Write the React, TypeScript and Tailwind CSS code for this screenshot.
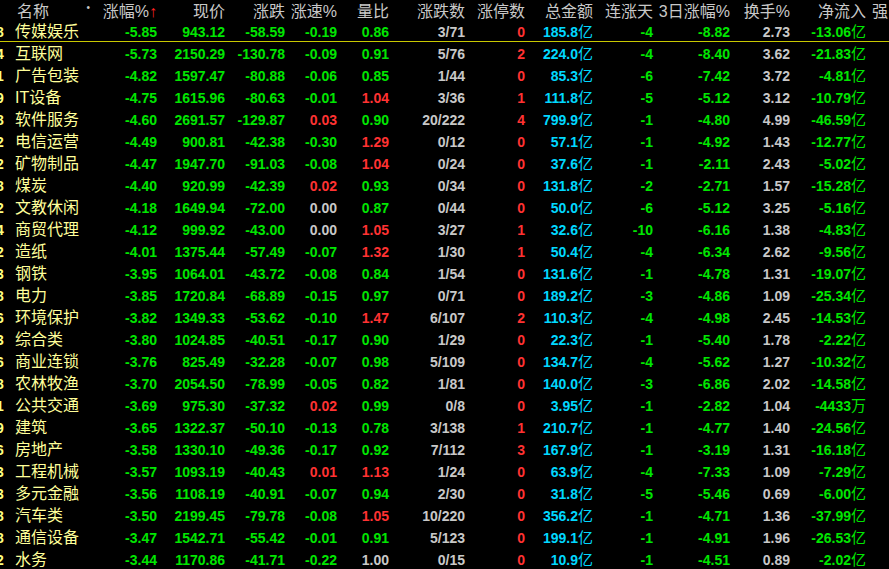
const rows: string[][] = [
  ['8', '传媒娱乐', '-5.85', '943.12', '-58.59', '-0.19', '0.86', '3/71', '0', '185.8', '-4', '-8.82', '2.73', '-13.06亿'],
  ['4', '互联网', '-5.73', '2150.29', '-130.78', '-0.09', '0.91', '5/76', '2', '224.0', '-4', '-8.40', '3.62', '-21.83亿'],
  ['1', '广告包装', '-4.82', '1597.47', '-80.88', '-0.06', '0.85', '1/44', '0', '85.3', '-6', '-7.42', '3.72', '-4.81亿'],
  ['9', 'IT设备', '-4.75', '1615.96', '-80.63', '-0.01', '1.04', '3/36', '1', '111.8', '-5', '-5.12', '3.12', '-10.79亿'],
  ['8', '软件服务', '-4.60', '2691.57', '-129.87', '0.03', '0.90', '20/222', '4', '799.9', '-1', '-4.80', '4.99', '-46.59亿'],
  ['2', '电信运营', '-4.49', '900.81', '-42.38', '-0.30', '1.29', '0/12', '0', '57.1', '-1', '-4.92', '1.43', '-12.77亿'],
  ['2', '矿物制品', '-4.47', '1947.70', '-91.03', '-0.08', '1.04', '0/24', '0', '37.6', '-1', '-2.11', '2.43', '-5.02亿'],
  ['8', '煤炭', '-4.40', '920.99', '-42.39', '0.02', '0.93', '0/34', '0', '131.8', '-2', '-2.71', '1.57', '-15.28亿'],
  ['2', '文教休闲', '-4.18', '1649.94', '-72.00', '0.00', '0.87', '0/44', '0', '50.0', '-6', '-5.12', '3.25', '-5.16亿'],
  ['4', '商贸代理', '-4.12', '999.92', '-43.00', '0.00', '1.05', '3/27', '1', '32.6', '-10', '-6.16', '1.38', '-4.83亿'],
  ['2', '造纸', '-4.01', '1375.44', '-57.49', '-0.07', '1.32', '1/30', '1', '50.4', '-4', '-6.34', '2.62', '-9.56亿'],
  ['3', '钢铁', '-3.95', '1064.01', '-43.72', '-0.08', '0.84', '1/54', '0', '131.6', '-1', '-4.78', '1.31', '-19.07亿'],
  ['8', '电力', '-3.85', '1720.84', '-68.89', '-0.15', '0.97', '0/71', '0', '189.2', '-3', '-4.86', '1.09', '-25.34亿'],
  ['6', '环境保护', '-3.82', '1349.33', '-53.62', '-0.10', '1.47', '6/107', '2', '110.3', '-4', '-4.98', '2.45', '-14.53亿'],
  ['3', '综合类', '-3.80', '1024.85', '-40.51', '-0.17', '0.90', '1/29', '0', '22.3', '-1', '-5.40', '1.78', '-2.22亿'],
  ['6', '商业连锁', '-3.76', '825.49', '-32.28', '-0.07', '0.98', '5/109', '0', '134.7', '-4', '-5.62', '1.27', '-10.32亿'],
  ['8', '农林牧渔', '-3.70', '2054.50', '-78.99', '-0.05', '0.82', '1/81', '0', '140.0', '-3', '-6.86', '2.02', '-14.58亿'],
  ['1', '公共交通', '-3.69', '975.30', '-37.32', '0.02', '0.99', '0/8', '0', '3.95', '-1', '-2.82', '1.04', '-4433万'],
  ['9', '建筑', '-3.65', '1322.37', '-50.10', '-0.13', '0.78', '3/138', '1', '210.7', '-1', '-4.77', '1.40', '-24.56亿'],
  ['6', '房地产', '-3.58', '1330.10', '-49.36', '-0.17', '0.92', '7/112', '3', '167.9', '-1', '-3.19', '1.31', '-16.18亿'],
  ['3', '工程机械', '-3.57', '1093.19', '-40.43', '0.01', '1.13', '1/24', '0', '63.9', '-4', '-7.33', '1.09', '-7.29亿'],
  ['3', '多元金融', '-3.56', '1108.19', '-40.91', '-0.07', '0.94', '2/30', '0', '31.8', '-5', '-5.46', '0.69', '-6.00亿'],
  ['8', '汽车类', '-3.50', '2199.45', '-79.78', '-0.08', '1.05', '10/220', '0', '356.2', '-1', '-4.71', '1.36', '-37.99亿'],
  ['8', '通信设备', '-3.47', '1542.71', '-55.42', '-0.01', '0.91', '5/123', '0', '199.1', '-1', '-4.91', '1.96', '-26.53亿'],
  ['2', '水务', '-3.44', '1170.86', '-41.71', '-0.22', '1.00', '0/15', '0', '10.9', '-1', '-4.51', '0.89', '-2.02亿'],
];

const cols = 'grid grid-cols-[15px_85px_57px_68px_60px_52px_52px_76px_60px_68px_60px_77px_60px_76px_1fr]';

const speedColor = (v: string) => (v.startsWith('-') ? 'text-[#00e600]' : v === '0.00' ? 'text-[#c8c8c8]' : 'text-[#ff3232]');
const ratioColor = (v: string) => (parseFloat(v) > 1 ? 'text-[#ff3232]' : parseFloat(v) === 1 ? 'text-[#c8c8c8]' : 'text-[#00e600]');

function Unit({ v, cls }: { v: string; cls: string }) {
  const num = v.slice(0, -1);
  const u = v.slice(-1);
  return (
    <div className={`text-right ${cls}`}>
      <span className="font-bold">{num}</span>
      <span className="font-normal text-[15px]">{u}</span>
    </div>
  );
}

export default function App() {
  return (
    <div
      className="w-[889px] h-[569px] bg-black overflow-hidden text-[14px] text-[#c8c8c8]"
      style={{ fontFamily: '"Liberation Sans", "Noto Sans CJK SC", sans-serif' }}
    >
      <div className={`${cols} h-[20px] items-center text-[16px] whitespace-nowrap`}>
        <div />
        <div className="flex justify-between pl-[2px] pr-[10px]">
          <span>名称</span>
          <span className="text-[10px]">•</span>
        </div>
        <div className="text-right">
          涨幅%<span className="text-[#ff2020] font-bold">↑</span>
        </div>
        <div className="text-right">现价</div>
        <div className="text-right">涨跌</div>
        <div className="text-right">涨速%</div>
        <div className="text-right">量比</div>
        <div className="text-right">涨跌数</div>
        <div className="text-right">涨停数</div>
        <div className="text-right">总金额</div>
        <div className="text-right">连涨天</div>
        <div className="text-right">3日涨幅%</div>
        <div className="text-right">换手%</div>
        <div className="text-right">净流入</div>
        <div className="pl-[6px]">强</div>
      </div>
      {rows.map((r, i) => (
        <div
          key={r[1]}
          className={`${cols} h-[22px] items-center whitespace-nowrap ${i === 0 ? 'border-b border-[#c8c800]' : ''}`}
        >
          <div className="text-[#ffff80] font-bold -ml-[4px]">{r[0]}</div>
          <div className="text-[#ffff9a] text-[16px]">{r[1]}</div>
          <div className="text-right font-bold text-[#00e600]">{r[2]}</div>
          <div className="text-right font-bold text-[#00e600]">{r[3]}</div>
          <div className="text-right font-bold text-[#00e600]">{r[4]}</div>
          <div className={`text-right font-bold ${speedColor(r[5])}`}>{r[5]}</div>
          <div className={`text-right font-bold ${ratioColor(r[6])}`}>{r[6]}</div>
          <div className="text-right font-bold">{r[7]}</div>
          <div className="text-right font-bold text-[#ff3232]">{r[8]}</div>
          <Unit v={r[9] + '亿'} cls="text-[#00d8ff]" />
          <div className="text-right font-bold text-[#00e600]">{r[10]}</div>
          <div className="text-right font-bold text-[#00e600]">{r[11]}</div>
          <div className="text-right font-bold">{r[12]}</div>
          <Unit v={r[13]} cls="text-[#00e600]" />
          <div />
        </div>
      ))}
    </div>
  );
}
